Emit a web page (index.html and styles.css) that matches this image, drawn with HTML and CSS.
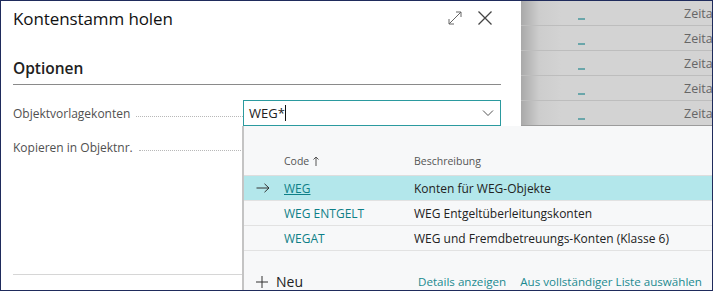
FILE: index.html
```html
<!DOCTYPE html>
<html lang="de">
<head>
    <meta charset="UTF-8">
    <title>Kontenstamm holen</title>
    <link rel="stylesheet" href="styles.css">
</head>
<body>
    <div class="frame">
        <div class="dialog">
            <div class="dialog-header">
                <h1>Kontenstamm holen</h1>
                <div class="header-icons">
                    <svg class="icon-expand" width="16" height="16" viewBox="0 0 16 16">
                        <path d="M2 14 L14 2 M9 2 H14 V7 M2 9 V14 H7" fill="none" stroke="#666" stroke-width="1"/>
                    </svg>
                    <svg class="icon-close" width="16" height="16" viewBox="0 0 16 16">
                        <path d="M1.5 1.5 L14.5 14.5 M14.5 1.5 L1.5 14.5" fill="none" stroke="#444" stroke-width="1.3"/>
                    </svg>
                </div>
            </div>

            <h2 class="section-title">Optionen</h2>

            <div class="field">
                <span class="field-label">Objektvorlagekonten</span>
                <div class="field-input active">
                    <span class="input-text">WEG*<span class="caret"></span></span>
                    <svg width="12" height="8" viewBox="0 0 12 8">
                        <path d="M1 1.5 L6 6.5 L11 1.5" fill="none" stroke="#555" stroke-width="1"/>
                    </svg>
                </div>
            </div>
            <div class="field">
                <span class="field-label">Kopieren in Objektnr.</span>
                <div class="field-input"></div>
            </div>

            <div class="dialog-footer"></div>
        </div>

        <div class="page-behind">
            <div class="bg-row"><span class="bg-dash"></span><span class="bg-text">Zeita.</span></div>
            <div class="bg-row"><span class="bg-dash"></span><span class="bg-text">Zeita.</span></div>
            <div class="bg-row"><span class="bg-dash"></span><span class="bg-text">Zeita.</span></div>
            <div class="bg-row"><span class="bg-dash"></span><span class="bg-text">Zeita.</span></div>
            <div class="bg-row last"><span class="bg-dash"></span><span class="bg-text">Zeita.</span></div>
        </div>

        <!-- lookup dropdown, lies over dialog and page -->
        <div class="lookup">
            <div class="lookup-head">
                <span class="col-arrow"></span>
                <span class="col-code">Code
                    <svg class="sort" width="6" height="10" viewBox="0 0 6 10">
                        <path d="M3 10 V1 M0.5 3.5 L3 1 L5.5 3.5" fill="none" stroke="#555" stroke-width="1"/>
                    </svg>
                </span>
                <span class="col-desc">Beschreibung</span>
            </div>
            <div class="lookup-row selected">
                <span class="col-arrow">
                    <svg width="14" height="10" viewBox="0 0 14 10">
                        <path d="M0.5 5 H13 M8.5 0.8 L13 5 L8.5 9.2" fill="none" stroke="#333" stroke-width="1"/>
                    </svg>
                </span>
                <span class="col-code"><a href="#">WEG</a></span>
                <span class="col-desc">Konten für WEG-Objekte</span>
            </div>
            <div class="lookup-row">
                <span class="col-arrow"></span>
                <span class="col-code">WEG ENTGELT</span>
                <span class="col-desc">WEG Entgeltüberleitungskonten</span>
            </div>
            <div class="lookup-row">
                <span class="col-arrow"></span>
                <span class="col-code">WEGAT</span>
                <span class="col-desc">WEG und Fremdbetreuungs-Konten (Klasse 6)</span>
            </div>
            <div class="lookup-footer">
                <span class="new-btn">
                    <svg class="plus" width="12" height="12" viewBox="0 0 12 12">
                        <path d="M6 0 V12 M0 6 H12" fill="none" stroke="#333" stroke-width="1"/>
                    </svg>Neu
                </span>
                <span class="footer-link">Details anzeigen</span>
                <span class="footer-link">Aus vollständiger Liste auswählen</span>
            </div>
        </div>
    </div>
</body>
</html>
```

FILE: styles.css
```css
/* Page frame */
body {
    margin: 0;
    font-family: "Segoe UI", "Open Sans", "Noto Sans", sans-serif;
    color: #212121;
}

.frame {
    position: relative;
    width: 711px;
    height: 289px;
    border: 1px solid #1f2b5c;
    display: flex;
    overflow: hidden;
    background-color: #fff;
}

/* Dialog on the left */
.dialog {
    width: 520px;
    flex-shrink: 0;
    padding: 0 20px 0 12px;
    box-sizing: border-box;
    display: flex;
    flex-direction: column;
    background-color: #fff;
    position: relative;
    z-index: 1;
}

.dialog-header {
    display: flex;
    justify-content: space-between;
    align-items: center;
    height: 32px;
    padding-top: 1px;
}

.dialog-header h1 {
    margin: 0;
    font-size: 17px;
    font-weight: 500;
    color: #111;
    letter-spacing: -0.1px;
}

.header-icons {
    display: flex;
    gap: 14px;
    margin-right: 8px;
}

.section-title {
    margin: 21px 0 0;
    font-size: 15.5px;
    font-weight: 600;
    padding-bottom: 3px;
    border-bottom: 1px solid #8a8a8a;
    line-height: 26px;
}

.field {
    display: flex;
    align-items: center;
    height: 34px;
}

.section-title + .field {
    margin-top: 11px;
}

.field-label {
    width: 230px;
    flex-shrink: 0;
    font-size: 12px;
    color: #505050;
    display: flex;
    align-items: center;
    overflow: hidden;
    white-space: nowrap;
}

.field-label::after {
    content: "";
    flex: 1;
    margin-left: 6px;
    margin-top: 6px;
    border-bottom: 1px dotted #b8b8b8;
}

.field-input {
    flex: 1;
    height: 24px;
    display: flex;
    align-items: center;
    justify-content: space-between;
    padding: 0 6px 0 5px;
}

.field-input.active {
    border: 1px solid #2b9a9f;
}

.input-text {
    font-size: 13px;
    display: flex;
    align-items: center;
}

.caret {
    display: inline-block;
    width: 1px;
    height: 16px;
    background-color: #111;
}

.dialog-footer {
    margin-top: auto;
    margin-bottom: 15px;
    border-top: 1px solid #d6d6d6;
}

/* Page behind the dialog */
.page-behind {
    flex: 1;
    background: linear-gradient(to right, #a9a9a9 0, #cdcdcd 18px, #d3d3d3 40px);
    display: flex;
    flex-direction: column;
}

.bg-row {
    height: 24px;
    border-bottom: 1px solid #bdbdbd;
    display: flex;
    align-items: center;
}

.bg-row.last {
    border-bottom: 2px solid #9c9c9c;
}

.bg-dash {
    width: 7px;
    height: 2px;
    background-color: #6aa6aa;
    margin-left: 57px;
    margin-top: 12px;
}

.bg-text {
    margin-left: 99px;
    font-size: 12.5px;
    color: #666;
    white-space: nowrap;
}

/* Lookup dropdown */
.lookup {
    position: absolute;
    left: 241px;
    top: 125px;
    right: 0;
    bottom: 0;
    z-index: 2;
    background-color: #f7f8f9;
    border-left: 2px solid #c4c4c4;
    font-size: 12px;
    white-space: nowrap;
}

.lookup-head,
.lookup-row {
    display: flex;
    align-items: center;
}

.lookup-head {
    height: 50px;
    align-items: flex-end;
    padding-bottom: 7px;
    box-sizing: border-box;
    border-bottom: 1px solid #dedede;
    font-size: 10.5px;
    color: #555;
}

.lookup-row {
    height: 24px;
    border-bottom: 1px solid #e2e2e2;
}

.lookup-row:last-of-type {
    border-bottom: none;
}

.lookup-row.selected {
    background-color: #b3e7eb;
}

.col-arrow {
    width: 40px;
    padding-left: 12px;
    box-sizing: border-box;
    display: flex;
    align-items: center;
}

.col-code {
    width: 130px;
    color: #0e7f87;
}

.lookup-head .col-code,
.lookup-head .col-desc {
    color: #555;
}

.sort {
    margin-left: 1px;
    vertical-align: -1px;
}

.col-code a {
    color: #0e7f87;
}

.col-desc {
    color: #222;
}

.lookup-footer {
    display: flex;
    align-items: center;
    margin-top: 21px;
    padding-left: 12px;
}

.new-btn {
    font-size: 14px;
    width: 162px;
    flex-shrink: 0;
    display: flex;
    align-items: center;
    color: #222;
}

.plus {
    margin-right: 8px;
}

.footer-link {
    color: #1b8a90;
    font-size: 11.6px;
    margin-right: 14px;
}

.footer-link:last-child {
    margin-right: 0;
}
```
